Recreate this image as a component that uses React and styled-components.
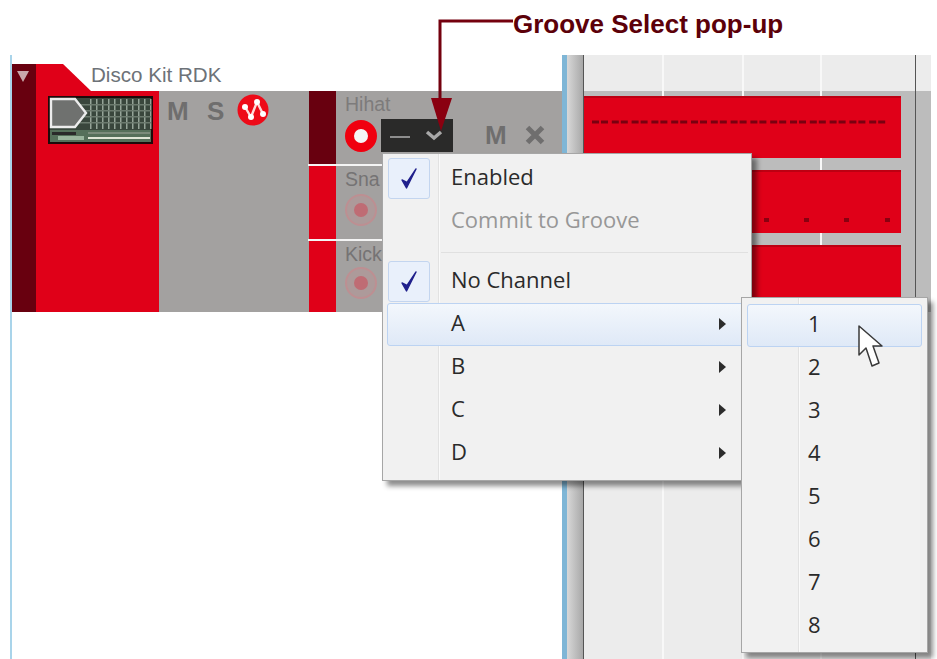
import React from "react";
import styled, { createGlobalStyle, css } from "styled-components";

const GlobalStyle = createGlobalStyle`
  html, body {
    margin: 0;
    padding: 0;
    background: #fff;
  }
`;

const gridLines = css`
  background-image: linear-gradient(
    90deg,
    transparent 78px,
    #f8f8f8 78px,
    #f8f8f8 80px,
    transparent 80px,
    transparent 158px,
    #f8f8f8 158px,
    #f8f8f8 160px,
    transparent 160px,
    transparent 236px,
    #f8f8f8 236px,
    #f8f8f8 238px,
    transparent 238px
  );
`;

const Page = styled.div`
  position: relative;
  width: 937px;
  height: 659px;
  overflow: hidden;
  display: flex;
  flex-direction: column;
  background: #fff;
  font-family: "Liberation Sans", Arial, sans-serif;
`;

const Callout = styled.div`
  height: 48px;
  padding: 0 0 7px 513px;
  display: flex;
  align-items: center;
  font-size: 26px;
  font-weight: 700;
  color: #5c0009;
`;

const Workspace = styled.div`
  flex: 1;
  display: flex;
  margin-left: 10px;
`;

const TrackPane = styled.div`
  width: 550px;
  padding-top: 9px;
  border-left: 2px solid #a9d4ea;
`;

const FolderTrack = styled.div`
  height: 248px;
  display: flex;
`;

const CollapseBar = styled.div`
  width: 24px;
  padding: 7px 0 0 5px;
  box-sizing: border-box;
  background: #68000f;
`;

const CollapseTriangle = styled.div`
  width: 0;
  height: 0;
  border-left: 6px solid transparent;
  border-right: 6px solid transparent;
  border-top: 11px solid #c9a7ab;
`;

const FolderMain = styled.div`
  flex: 1;
  display: flex;
  flex-direction: column;
`;

const TitleRow = styled.div`
  height: 27px;
  display: flex;
`;

const TitleTab = styled.div`
  width: 55px;
  background: #e00018;
  clip-path: polygon(0 0, 27px 0, 100% 100%, 0 100%);
`;

const TrackTitle = styled.div`
  font-size: 20.6px;
  line-height: 22px;
  color: #6d7278;
`;

const FolderBody = styled.div`
  flex: 1;
  display: flex;
`;

const FolderRed = styled.div`
  width: 123px;
  padding: 5px 0 0 12px;
  box-sizing: border-box;
  background: #e00018;
`;

const Thumbnail = styled.svg`
  display: block;
  width: 105px;
  height: 48px;
`;

const FolderControls = styled.div`
  width: 149px;
  padding: 6px 0 0 8px;
  box-sizing: border-box;
  display: flex;
  align-items: flex-start;
  background: #a3a1a0;
`;

const LetterButton = styled.span`
  width: ${({ $width }) => $width}px;
  font-size: 26px;
  line-height: 28px;
  font-weight: 700;
  color: #6f6e6e;
`;

const GrooveIcon = styled.svg`
  width: 32px;
  height: 32px;
  margin-top: -3px;
`;

const ChildTracks = styled.div`
  flex: 1;
  display: flex;
  flex-direction: column;
  gap: 2px;
  background: #f4f4f4;
`;

const ChildTrack = styled.div`
  height: ${({ $height }) => $height}px;
  display: flex;
  background: #a3a1a0;
`;

const Strip = styled.div`
  width: 27px;
  margin-left: 1px;
  background: ${({ $active }) => ($active ? "#68000f" : "#e00018")};
`;

const ChildBody = styled.div`
  flex: 1;
  padding: 2px 0 0 9px;
`;

const ChildLabel = styled.div`
  font-size: 19.5px;
  line-height: 22px;
  color: ${({ $active }) => ($active ? "#7d7b7b" : "#757374")};
`;

const ChildControls = styled.div`
  height: 36px;
  margin-top: 2px;
  display: flex;
  align-items: center;
`;

const RecordRing = styled.div`
  width: 32px;
  height: 32px;
  margin-top: ${({ $shift }) => $shift}px;
  flex: none;
  box-sizing: border-box;
  border-radius: 50%;
  display: flex;
  align-items: center;
  justify-content: center;
  background: ${({ $armed }) => ($armed ? "#f5f5f5" : "#ad9a9a")};
  border: ${({ $armed }) => ($armed ? "9px solid #f0000f" : "2px solid #bd8f92")};
`;

const RecordDot = styled.div`
  width: 14px;
  height: 14px;
  border-radius: 50%;
  background: #bf6c74;
`;

const GrooveSelect = styled.div`
  width: 72px;
  height: 33px;
  margin: 0 32px 0 4px;
  padding: 0 10px 0 9px;
  box-sizing: border-box;
  display: flex;
  align-items: center;
  justify-content: space-between;
  background: #2a2a29;
`;

const GrooveDash = styled.div`
  width: 20px;
  height: 2px;
  margin-top: 3px;
  background: #8d8d8d;
`;

const Divider = styled.div`
  width: 16px;
  border-left: 5px solid #7fb6d6;
  border-right: 1px solid #555;
  background: linear-gradient(90deg, #d8d8d8, #a8a8a8);
`;

const Arrange = styled.div`
  position: relative;
  width: 347px;
  display: flex;
  flex-direction: column;

  &::after {
    content: "";
    position: absolute;
    left: 331px;
    top: 0;
    bottom: 0;
    width: 1px;
    background: #555;
  }
`;

const Ruler = styled.div`
  height: 36px;
  background-color: #ececec;
  ${gridLines}
`;

const LaneStack = styled.div`
  height: 216px;
  padding: 5px 30px 0 0;
  display: flex;
  flex-direction: column;
  gap: 12px;
  background-color: #bcbcbc;
  ${gridLines}
`;

const Lane = styled.div`
  height: ${({ $height }) => $height}px;
  box-sizing: border-box;
  border-top: 2px solid #bd0012;
  background: #e00018;
`;

const MidiPattern = styled.svg`
  display: block;
  width: 317px;
  height: 60px;
`;

const EmptyLanes = styled.div`
  flex: 1;
  background-color: #ececec;
  ${gridLines}
`;

const Menu = styled.div`
  position: absolute;
  left: ${({ $left }) => $left}px;
  top: ${({ $top }) => $top}px;
  width: ${({ $width }) => $width}px;
  height: ${({ $height }) => $height}px;
  box-sizing: border-box;
  padding: ${({ $pad }) => $pad};
  border: 1px solid #a6a6a6;
  box-shadow: 5px 5px 5px rgba(0, 0, 0, 0.45);
  font-family: "Open Sans", "Noto Sans", sans-serif;
  font-size: 22px;
  background: linear-gradient(
    90deg,
    #f1f1f1 ${({ $gutter }) => $gutter}px,
    #e2e2e2 ${({ $gutter }) => $gutter}px,
    #e2e2e2 ${({ $gutter }) => $gutter + 1}px,
    #fafafa ${({ $gutter }) => $gutter + 1}px,
    #fafafa ${({ $gutter }) => $gutter + 2}px,
    #f1f1f1 ${({ $gutter }) => $gutter + 2}px
  );
`;

const MenuItem = styled.div`
  height: 43px;
  box-sizing: border-box;
  display: flex;
  align-items: center;
  border-radius: 3px;
  border: 1px solid ${({ $hot }) => ($hot ? "#bcd3f2" : "transparent")};
  background: ${({ $hot }) => ($hot ? "linear-gradient(#f3f7fc, #dfe9f7)" : "transparent")};
  color: ${({ $disabled }) => ($disabled ? "#979797" : "#2a2a2a")};
`;

const MenuLabel = styled.span`
  padding-bottom: 5px;
`;

const IconCell = styled.div`
  width: ${({ $width }) => $width}px;
  height: 100%;
  flex: none;
  display: flex;
  align-items: center;
`;

const CheckBox = styled.div`
  width: 42px;
  height: 41px;
  box-sizing: border-box;
  display: flex;
  align-items: center;
  justify-content: center;
  border: 1px solid #c3d5ef;
  border-radius: 3px;
  background: #e9f0fb;
`;

const SubArrow = styled.div`
  width: 0;
  height: 0;
  margin: 0 21px 2px auto;
  border-top: 6px solid transparent;
  border-bottom: 6px solid transparent;
  border-left: 7px solid #2c2c2c;
`;

const MenuSeparator = styled.div`
  height: 17px;
  box-sizing: border-box;
  margin-left: 54px;
  border-bottom: 1px solid #e0e0e0;
  transform: translateY(-7px);
`;

const Overlay = styled.svg`
  position: absolute;
  left: 0;
  top: 0;
  width: 937px;
  height: 659px;
  pointer-events: none;
`;

const lanePulses = Array.from({ length: 15 }, (_, i) => 8 + i * 19.8);
const laneHits = [180, 220, 260, 301];
const thumbColumns = Array.from({ length: 11 }, (_, i) => 42 + i * 6);
const thumbRows = [8, 14, 20, 26];

const KitThumbnail = () => (
  <Thumbnail viewBox="0 0 105 48">
    <rect width="105" height="48" fill="#1d0a0a" />
    <rect x="2" y="2" width="101" height="44" fill="#39463c" />
    {thumbColumns.map((x) => (
      <rect key={x} x={x} y="3" width="1.5" height="30" fill="#96a498" />
    ))}
    {thumbRows.map((y) => (
      <rect key={y} x="30" y={y} width="73" height="1.5" fill="#6c7a6e" />
    ))}
    <path d="M3 3H27L38 17L27 31H3Z" fill="#6f716f" stroke="#ececec" strokeWidth="2.4" />
    <rect x="2" y="34" width="101" height="12" fill="#55705a" />
    <rect x="4" y="36" width="24" height="3" fill="#2a2a2a" />
    <rect x="10" y="40" width="26" height="4" fill="#9ab59d" />
    <rect x="40" y="41" width="62" height="2" fill="#dfe6d6" />
    <rect x="40" y="36" width="62" height="2" fill="#7b8c7b" />
  </Thumbnail>
);

const GrooveBadge = () => (
  <GrooveIcon viewBox="-16 -16 32 32">
    <circle r="15.5" fill="#ee0a18" />
    <path d="M-8 -3L-2 7L4 -8L10 4" fill="none" stroke="#ffd9d9" strokeWidth="2.4" />
    <circle cx="-8" cy="-3" r="3" fill="#fff" />
    <circle cx="-2" cy="7" r="3" fill="#fff" />
    <circle cx="4" cy="-8" r="3" fill="#fff" />
    <circle cx="10" cy="4" r="3" fill="#fff" />
  </GrooveIcon>
);

const CheckMark = () => (
  <svg width="18" height="24" viewBox="0 0 18 24">
    <path d="M2 13L6.5 21L16 2L7 15.5Z" fill="#20208c" stroke="#20208c" strokeWidth="1.4" strokeLinejoin="round" />
  </svg>
);

const CloseMark = () => (
  <svg width="22" height="22" viewBox="0 0 22 22">
    <path d="M3.5 3.5L18.5 18.5M18.5 3.5L3.5 18.5" stroke="#6f6e6e" strokeWidth="5" />
  </svg>
);

const ChevronMark = () => (
  <svg width="18" height="12" viewBox="0 0 18 12">
    <path d="M2 3L9 9L16 3" fill="none" stroke="#a8a8a8" strokeWidth="3.5" />
  </svg>
);

const App = () => (
  <>
    <GlobalStyle />
    <Page>
      <Callout>Groove Select pop-up</Callout>
      <Workspace>
        <TrackPane>
          <FolderTrack>
            <CollapseBar>
              <CollapseTriangle />
            </CollapseBar>
            <FolderMain>
              <TitleRow>
                <TitleTab />
                <TrackTitle>Disco Kit RDK</TrackTitle>
              </TitleRow>
              <FolderBody>
                <FolderRed>
                  <KitThumbnail />
                </FolderRed>
                <FolderControls>
                  <LetterButton $width={40}>M</LetterButton>
                  <LetterButton $width={30}>S</LetterButton>
                  <GrooveBadge />
                </FolderControls>
                <ChildTracks>
                  <ChildTrack $height={73}>
                    <Strip $active />
                    <ChildBody>
                      <ChildLabel $active>Hihat</ChildLabel>
                      <ChildControls>
                        <RecordRing $armed $shift={2} />
                        <GrooveSelect>
                          <GrooveDash />
                          <ChevronMark />
                        </GrooveSelect>
                        <LetterButton $width={39}>M</LetterButton>
                        <CloseMark />
                      </ChildControls>
                    </ChildBody>
                  </ChildTrack>
                  <ChildTrack $height={73}>
                    <Strip />
                    <ChildBody>
                      <ChildLabel>Sna</ChildLabel>
                      <ChildControls>
                        <RecordRing $shift={0}>
                          <RecordDot />
                        </RecordRing>
                      </ChildControls>
                    </ChildBody>
                  </ChildTrack>
                  <ChildTrack $height={71}>
                    <Strip />
                    <ChildBody>
                      <ChildLabel>Kick</ChildLabel>
                      <ChildControls>
                        <RecordRing $shift={-4}>
                          <RecordDot />
                        </RecordRing>
                      </ChildControls>
                    </ChildBody>
                  </ChildTrack>
                </ChildTracks>
              </FolderBody>
            </FolderMain>
          </FolderTrack>
        </TrackPane>
        <Divider />
        <Arrange>
          <Ruler />
          <LaneStack>
            <Lane $height={62}>
              <MidiPattern viewBox="0 0 317 60">
                {lanePulses.map((x) => (
                  <g key={x} fill="#7a0010">
                    <rect x={x} y="22.5" width="7" height="3" />
                    <rect x={x + 9} y="22.5" width="7" height="3" />
                  </g>
                ))}
              </MidiPattern>
            </Lane>
            <Lane $height={63}>
              <MidiPattern viewBox="0 0 317 60">
                {laneHits.map((x) => (
                  <rect key={x} x={x} y="46" width="5" height="4" fill="#8a0010" />
                ))}
              </MidiPattern>
            </Lane>
            <Lane $height={67} />
          </LaneStack>
          <EmptyLanes />
        </Arrange>
      </Workspace>

      <Menu $left={382} $top={153} $width={370} $height={328} $pad="3px 3px 0 4px" $gutter={55}>
        <MenuItem>
          <IconCell $width={63}>
            <CheckBox>
              <CheckMark />
            </CheckBox>
          </IconCell>
          <MenuLabel>Enabled</MenuLabel>
        </MenuItem>
        <MenuItem $disabled>
          <IconCell $width={63} />
          <MenuLabel>Commit to Groove</MenuLabel>
        </MenuItem>
        <MenuSeparator />
        <MenuItem>
          <IconCell $width={63}>
            <CheckBox>
              <CheckMark />
            </CheckBox>
          </IconCell>
          <MenuLabel>No Channel</MenuLabel>
        </MenuItem>
        {["A", "B", "C", "D"].map((label) => (
          <MenuItem key={label} $hot={label === "A"}>
            <IconCell $width={63} />
            <MenuLabel>{label}</MenuLabel>
            <SubArrow />
          </MenuItem>
        ))}
      </Menu>

      <Menu $left={741} $top={297} $width={187} $height={356} $pad="6px 5px 0" $gutter={56}>
        {[1, 2, 3, 4, 5, 6, 7, 8].map((n) => (
          <MenuItem key={n} $hot={n === 1}>
            <IconCell $width={60} />
            <MenuLabel>{n}</MenuLabel>
          </MenuItem>
        ))}
      </Menu>

      <Overlay viewBox="0 0 937 659">
        <path d="M513 21H440V100" fill="none" stroke="#74000e" strokeWidth="3" />
        <path d="M431 98H452L441 131Z" fill="#8a0010" />
        <path
          d="M859 326V355L866 348L872 366L879 363L873 346H882Z"
          fill="#fff"
          stroke="#3a3a3a"
          strokeWidth="1.5"
          strokeLinejoin="round"
        />
      </Overlay>
    </Page>
  </>
);

export default App;
